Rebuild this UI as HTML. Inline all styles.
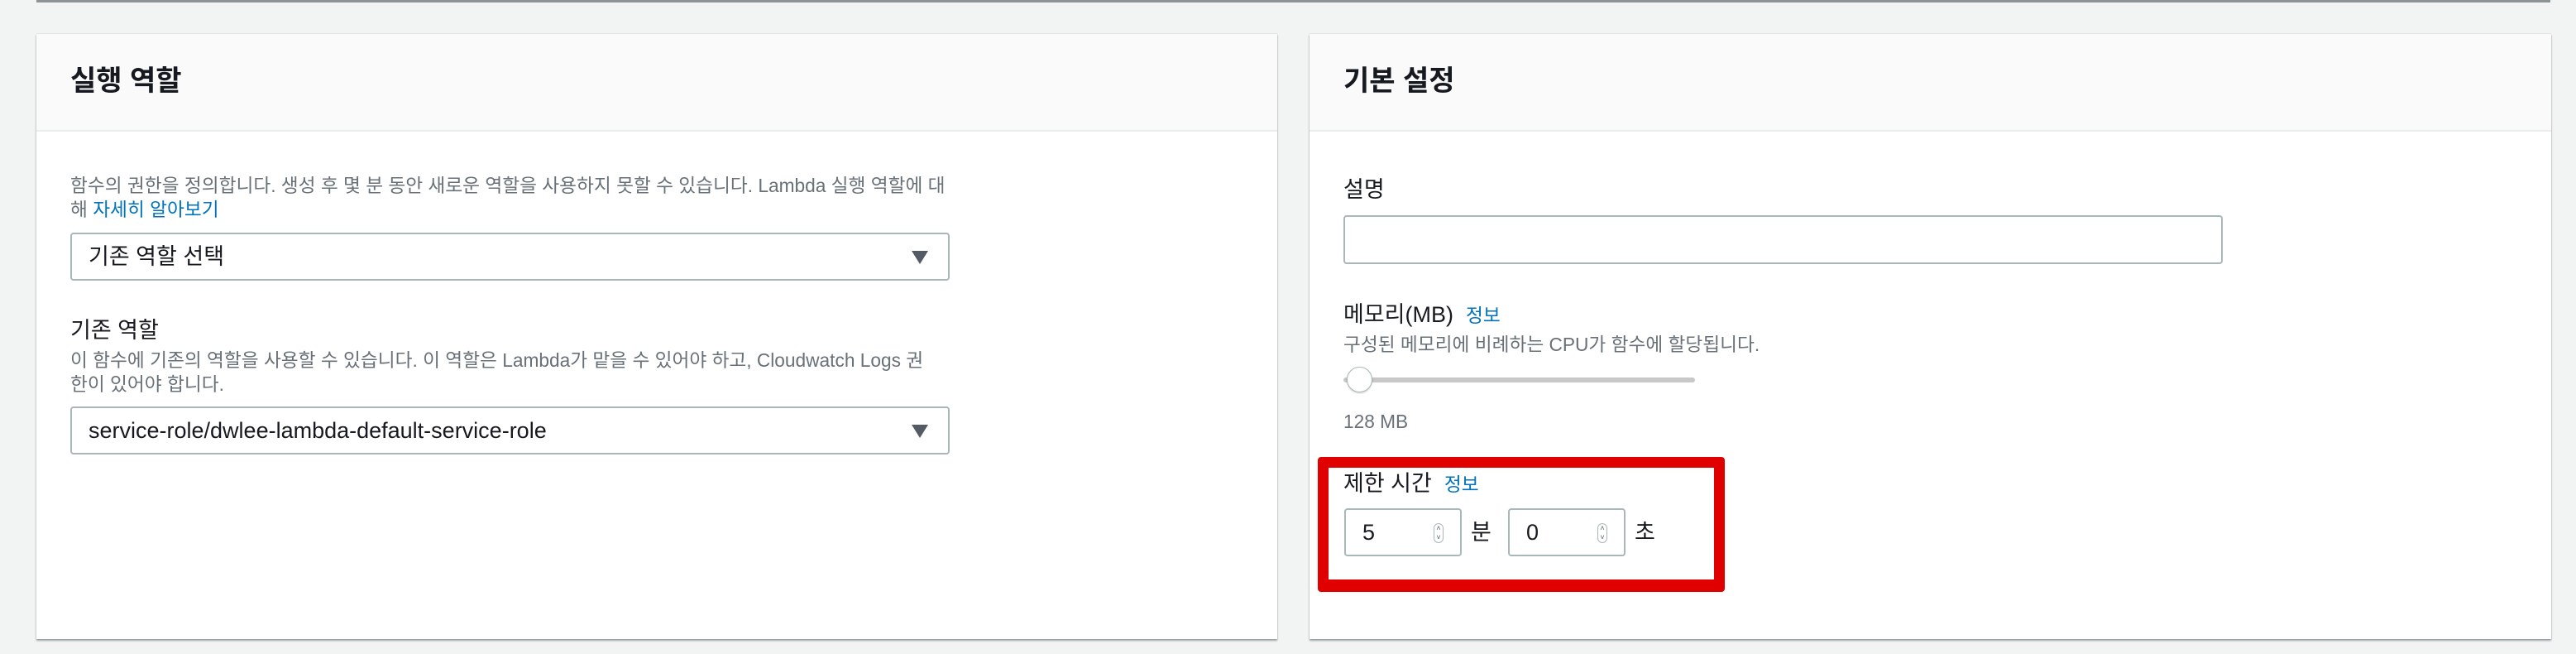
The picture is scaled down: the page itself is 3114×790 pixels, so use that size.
<!DOCTYPE html>
<html><head><meta charset="utf-8"><style>
*{box-sizing:border-box;margin:0;padding:0}
body{width:3114px;height:790px;background:#f2f3f3;position:relative;overflow:hidden;font-family:"Liberation Sans","Noto Sans CJK KR",sans-serif;color:#16191f}
.topline{position:absolute;left:44px;width:3039px;top:0;height:3px;background:#8d9496}
.panel{position:absolute;top:41px;height:731px;background:#fff;box-shadow:0 2px 2px rgba(0,28,36,.35),0 0 1px rgba(0,28,36,.3)}
.hdr{height:118px;background:#fafafa;border-bottom:2px solid #eaeded;padding-left:41px;padding-top:37px;font-size:34px;line-height:40px;font-weight:bold}
.t{position:absolute;white-space:nowrap}
.desc{font-size:22.7px;color:#687078;line-height:29px}
.lab{font-size:27px;color:#16191f;line-height:32px}
.link{color:#0073bb}
.box{position:absolute;border:2px solid #aab7b8;border-radius:4px;background:#fff}
.sel{font-size:27px;padding-left:20px;line-height:54px}
.tri{position:absolute;right:24px;top:20px;width:0;height:0;border-left:10px solid transparent;border-right:10px solid transparent;border-top:16px solid #545b64}
.spin{position:absolute;right:20px;top:16px;width:12px;height:24px;border:1px solid #aab7b8;border-radius:6px;font-size:9px;line-height:11px;text-align:center;color:#545b64}
</style></head><body>
<div class="topline"></div>
<div class="panel" style="left:44px;width:1500px">
  <div class="hdr">실행 역할</div>
  <div class="t desc" style="left:41px;top:169px">함수의 권한을 정의합니다. 생성 후 몇 분 동안 새로운 역할을 사용하지 못할 수 있습니다. Lambda 실행 역할에 대<br>해 <span class="link">자세히 알아보기</span></div>
  <div class="box sel" style="left:41px;top:240px;width:1063px;height:58px">기존 역할 선택<div class="tri"></div></div>
  <div class="t lab" style="left:41px;top:342px">기존 역할</div>
  <div class="t desc" style="left:41px;top:380px">이 함수에 기존의 역할을 사용할 수 있습니다. 이 역할은 Lambda가 맡을 수 있어야 하고, Cloudwatch Logs 권<br>한이 있어야 합니다.</div>
  <div class="box sel" style="left:41px;top:450px;width:1063px;height:58px">service-role/dwlee-lambda-default-service-role<div class="tri"></div></div>
</div>
<div class="panel" style="left:1583px;width:1501px">
  <div class="hdr">기본 설정</div>
  <div class="t lab" style="left:41px;top:172px">설명</div>
  <div class="box" style="left:41px;top:219px;width:1063px;height:59px"></div>
  <div class="t lab" style="left:41px;top:323px">메모리(MB) &nbsp;<span class="link" style="font-size:22.7px">정보</span></div>
  <div class="t desc" style="left:41px;top:361px">구성된 메모리에 비례하는 CPU가 함수에 할당됩니다.</div>
  <div style="position:absolute;left:41px;top:415px;width:425px;height:6px;border-radius:3px;background:#c8c8c8"></div>
  <div style="position:absolute;left:45px;top:402px;width:31px;height:31px;border-radius:50%;background:#fff;border:1px solid #aab7b8;box-shadow:0 1px 2px rgba(0,0,0,.2)"></div>
  <div class="t desc" style="left:41px;top:454px">128 MB</div>
  <div style="position:absolute;left:10px;top:511px;width:492px;height:163px;border:13px solid #e00000;border-bottom-width:15px;border-radius:4px"></div>
  <div class="t lab" style="left:41px;top:527px">제한 시간 &nbsp;<span class="link" style="font-size:22.7px">정보</span></div>
  <div class="box" style="left:42px;top:573px;width:142px;height:58px;font-size:27px;line-height:54px;padding-left:20px">5<div class="spin">˄<br>˅</div></div>
  <div class="t lab" style="left:195px;top:586px">분</div>
  <div class="box" style="left:240px;top:573px;width:142px;height:58px;font-size:27px;line-height:54px;padding-left:20px">0<div class="spin">˄<br>˅</div></div>
  <div class="t lab" style="left:393px;top:586px">초</div>
</div>
</body></html>
